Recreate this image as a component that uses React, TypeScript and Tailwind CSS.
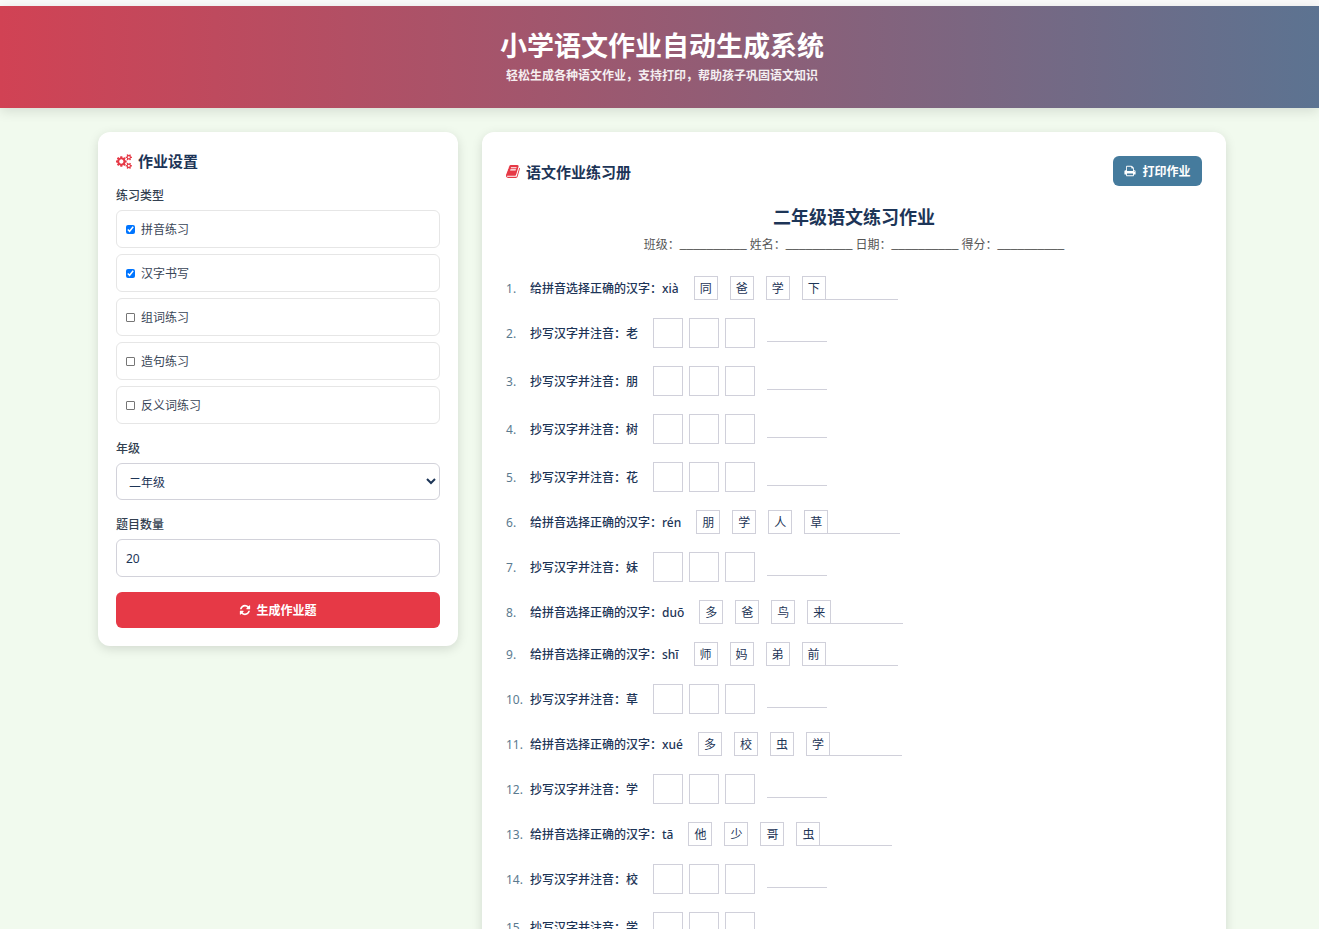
import React from "react";

type Q = { t: "c"; py: string; opts: string[] } | { t: "w"; ch: string };

const questions: Q[] = [
  { t: "c", py: "xià", opts: ["同", "爸", "学", "下"] },
  { t: "w", ch: "老" },
  { t: "w", ch: "朋" },
  { t: "w", ch: "树" },
  { t: "w", ch: "花" },
  { t: "c", py: "rén", opts: ["朋", "学", "人", "草"] },
  { t: "w", ch: "妹" },
  { t: "c", py: "duō", opts: ["多", "爸", "鸟", "来"] },
  { t: "c", py: "shī", opts: ["师", "妈", "弟", "前"] },
  { t: "w", ch: "草" },
  { t: "c", py: "xué", opts: ["多", "校", "虫", "学"] },
  { t: "w", ch: "学" },
  { t: "c", py: "tā", opts: ["他", "少", "哥", "虫"] },
  { t: "w", ch: "校" },
  { t: "w", ch: "学" },
];

const types: [string, boolean][] = [
  ["拼音练习", true],
  ["汉字书写", true],
  ["组词练习", false],
  ["造句练习", false],
  ["反义词练习", false],
];

const Cogs = ({ className }: { className: string }) => (
  <svg viewBox="0 0 1920 1792" fill="currentColor" className={className}>
    <path d="M896 896q0-106-75-181t-181-75-181 75-75 181 75 181 181 75 181-75 75-181zm768 512q0-52-38-90t-90-38-90 38-38 90q0 53 37.5 90.5t90.5 37.5 90.5-37.5 37.5-90.5zm0-1024q0-52-38-90t-90-38-90 38-38 90q0 53 37.5 90.5t90.5 37.5 90.5-37.5 37.5-90.5zm-384 421v185q0 10-7 19.5t-16 10.5l-155 24q-11 35-32 76 34 48 90 115 7 11 7 20 0 12-7 19-23 30-82.5 89.5t-78.5 59.5q-11 0-21-7l-115-90q-37 19-77 31-11 108-23 155-7 24-30 24h-186q-11 0-20-7.5t-10-17.5l-23-153q-34-10-75-31l-118 89q-7 7-20 7-11 0-21-8-144-133-144-160 0-9 7-19 10-14 41-53t47-61q-23-44-35-82l-152-24q-10-1-17-9.5t-7-19.5v-185q0-10 7-19.5t16-10.5l155-24q11-35 32-76-34-48-90-115-7-11-7-20 0-12 7-20 22-30 82-89t79-59q11 0 21 7l115 90q34-18 77-32 11-108 23-154 7-24 30-24h186q11 0 20 7.5t10 17.5l23 153q34 10 75 31l118-89q8-7 20-7 11 0 21 8 144 133 144 160 0 8-7 19-12 16-42 54t-45 60q23 48 34 82l152 23q10 2 17 10.5t7 19.5zm640 533v140q0 16-149 31-12 27-30 52 51 113 51 138 0 4-4 7-122 71-124 71-8 0-46-47t-52-68q-20 2-30 2t-30-2q-14 21-52 68t-46 47q-2 0-124-71-4-3-4-7 0-25 51-138-18-25-30-52-149-15-149-31v-140q0-16 149-31 13-29 30-52-51-113-51-138 0-4 4-7 4-2 35-20t59-34 30-16q8 0 46 46.5t52 67.5q20-2 30-2t30 2q51-71 92-112l6-2q4 0 124 70 4 3 4 7 0 25-51 138 17 23 30 52 149 15 149 31zm0-1024v140q0 16-149 31-12 27-30 52 51 113 51 138 0 4-4 7-122 71-124 71-8 0-46-47t-52-68q-20 2-30 2t-30-2q-14 21-52 68t-46 47q-2 0-124-71-4-3-4-7 0-25 51-138-18-25-30-52-149-15-149-31v-140q0-16 149-31 13-29 30-52-51-113-51-138 0-4 4-7 4-2 35-20t59-34 30-16q8 0 46 46.5t52 67.5q20-2 30-2t30 2q51-71 92-112l6-2q4 0 124 70 4 3 4 7 0 25-51 138 17 23 30 52 149 15 149 31z" />
  </svg>
);

const Book = ({ className }: { className: string }) => (
  <svg viewBox="0 0 1792 1792" fill="currentColor" className={className}>
    <path d="M1639 478q40 57 18 129l-275 906q-19 64-76.5 107.5t-122.5 43.5h-923q-77 0-148.5-53.5t-99.5-131.5q-24-67-2-127 0-4 3-27t4-37q1-8-3-21.5t-3-19.5q2-11 8-21t16.5-23.5 16.5-23.5q23-38 45-91.5t30-91.5q3-10 .5-30t-.5-28q3-11 17-28t17-23q21-36 42-92t25-90q1-9-2.5-32t.5-28q4-13 22-30.5t22-22.5q19-26 42.5-84.5t27.5-96.5q1-8-3-25.5t-2-26.5q2-8 9-18t18-23 17-21q8-12 16.5-30.5t15-35 16-36 19.5-32 26.5-23.5 36-11.5 47.5 5.5l-1 3q38-9 51-9h761q74 0 114 56t18 130l-274 906q-36 119-71.5 153.5t-128.5 34.5h-869q-27 0-38 15-11 16-1 43 24 70 144 70h923q29 0 56-15.5t35-41.5l300-987q7-22 5-57 38 15 59 43zm-1064 2q-4 13 2 22.5t20 9.5h608q13 0 25.5-9.5t16.5-22.5l21-64q4-13-2-22.5t-20-9.5h-608q-13 0-25.5 9.5t-16.5 22.5zm-83 256q-4 13 2 22.5t20 9.5h608q13 0 25.5-9.5t16.5-22.5l21-64q4-13-2-22.5t-20-9.5h-608q-13 0-25.5 9.5t-16.5 22.5z" />
  </svg>
);

const Refresh = ({ className }: { className: string }) => (
  <svg viewBox="0 0 1792 1792" fill="currentColor" className={className}>
    <path d="M1639 1056q0 5-1 7-64 268-268 434.5t-478 166.5q-146 0-282.5-55t-243.5-157l-129 129q-19 19-45 19t-45-19-19-45v-448q0-26 19-45t45-19h448q26 0 45 19t19 45-19 45l-137 137q71 66 161 102t187 36q134 0 250-65t186-179q11-17 53-117 8-23 30-23h192q13 0 22.5 9.5t9.5 22.5zm25-800v448q0 26-19 45t-45 19h-448q-26 0-45-19t-19-45 19-45l138-138q-148-137-349-137-134 0-250 65t-186 179q-11 17-53 117-8 23-30 23h-199q-13 0-22.5-9.5t-9.5-22.5v-7q65-268 270-434.5t480-166.5q146 0 284 55.5t245 156.5l130-129q19-19 45-19t45 19 19 45z" />
  </svg>
);

const Print = ({ className }: { className: string }) => (
  <svg viewBox="0 0 1792 1792" fill="currentColor" className={className}>
    <path d="M448 1536h896v-256h-896v256zm0-640h896v-384h-160q-40 0-68-28t-28-68v-160h-640v640zm1152 64q0-26-19-45t-45-19-45 19-19 45 19 45 45 19 45-19 19-45zm128 0v416q0 13-9.5 22.5t-22.5 9.5h-224v160q0 40-28 68t-68 28h-960q-40 0-68-28t-28-68v-160h-224q-13 0-22.5-9.5t-9.5-22.5v-416q0-79 56.5-135.5t135.5-56.5h64v-544q0-40 28-68t68-28h672q40 0 88 20t76 48l152 152q28 28 48 76t20 88v256h64q79 0 135.5 56.5t56.5 135.5z" />
  </svg>
);

const Blank = () => <span className="align-[2px] font-['Liberation_Sans',sans-serif]">__________</span>;

export default function App() {
  return (
    <div className="h-screen overflow-hidden bg-[#f1faee] text-[12px] text-[#1d3557] font-['Noto_Sans','Noto_Sans_CJK_SC',sans-serif]">
      <div className="h-[6px] bg-[#fafafa]" />
      <header className="h-[102px] bg-[linear-gradient(90deg,#d14254,#5c7391)] shadow-[0_3px_12px_rgba(0,0,0,0.12)] flex flex-col items-center pt-[23px] pl-[5px] text-white">
        <h1 className="text-[27px] leading-[34px] font-bold">小学语文作业自动生成系统</h1>
        <p className="mt-[5px] text-[12px] leading-[16px] font-bold opacity-90">轻松生成各种语文作业，支持打印，帮助孩子巩固语文知识</p>
      </header>

      <main className="flex items-start gap-6 pl-[98px] pt-6 w-[1226px] box-content">
        <aside className="w-[360px] shrink-0 bg-white rounded-[12px] shadow-[0_3px_11px_rgba(0,0,0,0.13)] p-[18px]">
          <h2 className="flex items-center gap-[6px] h-[22px] text-[15px] font-bold">
            <Cogs className="text-[#e63946] w-4 h-[15px]" />
            作业设置
          </h2>
          <div className="mt-[15px] h-[18px] leading-[18px] font-medium text-[#333f50]">练习类型</div>
          <div className="mt-[5px] flex flex-col gap-[6px]">
            {types.map(([name, on]) => (
              <label key={name} className="h-[38px] flex items-center gap-[6px] pl-[9px] border border-[#e6e6e6] rounded-[6px] text-[#3a4658]">
                <input type="checkbox" defaultChecked={on} className="w-[9px] h-[9px] m-0 appearance-none border border-[#767676] rounded-[1px] checked:appearance-auto checked:border-0" />
                <span className="pt-[2px]">{name}</span>
              </label>
            ))}
          </div>
          <div className="mt-[16px] h-[18px] leading-[18px] font-medium text-[#333f50]">年级</div>
          <select defaultValue="二年级" className="mt-[5px] w-full h-[37px] pl-[8px] pt-[2px] border border-[#d2d2da] rounded-[6px] bg-white text-[12px] text-[#1d3557]">
            <option>一年级</option>
            <option>二年级</option>
            <option>三年级</option>
          </select>
          <div className="mt-[16px] h-[18px] leading-[18px] font-medium text-[#333f50]">题目数量</div>
          <input type="number" defaultValue={20} className="mt-[5px] block w-full h-[38px] px-[9px] border border-[#d2d2da] rounded-[6px] text-[12px] text-[#1d3557]" />
          <button className="mt-[15px] w-full h-[36px] bg-[#e63946] rounded-[6px] text-white font-bold flex items-center justify-center gap-[5px]">
            <Refresh className="w-3 h-3" />
            <span className="pt-[2px]">生成作业题</span>
          </button>
        </aside>

        <section className="w-[744px] shrink-0 bg-white rounded-[12px] shadow-[0_3px_11px_rgba(0,0,0,0.13)] p-6 pb-[200px]">
          <div className="flex items-center justify-between h-[30px]">
            <h2 className="flex items-center gap-[5px] text-[15px] font-bold">
              <Book className="text-[#e63946] w-[15px] h-[15px]" />
              <span className="pt-[2px]">语文作业练习册</span>
            </h2>
            <button className="w-[89px] h-[30px] bg-[#457b9d] rounded-[6px] text-white font-bold flex items-center justify-center gap-[6px]">
              <Print className="w-3 h-3" />
              <span className="pt-[2px]">打印作业</span>
            </button>
          </div>
          <h3 className="mt-[17px] text-center text-[18px] leading-[28px] font-bold">二年级语文练习作业</h3>
          <p className="mt-[3px] h-[18px] text-center leading-[18px] text-[#555555]">班级：<Blank /> 姓名：<Blank /> 日期：<Blank /> 得分：<Blank /></p>
          <div className="mt-[24px]">
            {questions.map((q, i) => (
              <div key={i} className="flex items-center mb-[18px]">
                <span className="w-6 shrink-0 pt-[2px] text-[#5b7a8f]">{i + 1}.</span>
                {q.t === "c" ? (
                  <>
                    <span className="pt-[2px] font-medium">给拼音选择正确的汉字：{q.py}</span>
                    <div className="ml-[15px] flex gap-3">
                      {q.opts.map((o, j) => (
                        <span key={j} className="w-6 h-6 pt-[2px] flex items-center justify-center border border-[#d0d0da]">{o}</span>
                      ))}
                    </div>
                    <span className="self-end w-[72px] border-b border-[#d0d0da]" />
                  </>
                ) : (
                  <>
                    <span className="pt-[2px] font-medium">抄写汉字并注音：{q.ch}</span>
                    <div className="ml-[15px] flex gap-[6px]">
                      <span className="w-[30px] h-[30px] border border-[#d0d0da]" />
                      <span className="w-[30px] h-[30px] border border-[#d0d0da]" />
                      <span className="w-[30px] h-[30px] border border-[#d0d0da]" />
                    </div>
                    <span className="ml-3 mt-[17px] w-[60px] border-b border-[#d0d0da]" />
                  </>
                )}
              </div>
            ))}
          </div>
        </section>
      </main>
    </div>
  );
}
